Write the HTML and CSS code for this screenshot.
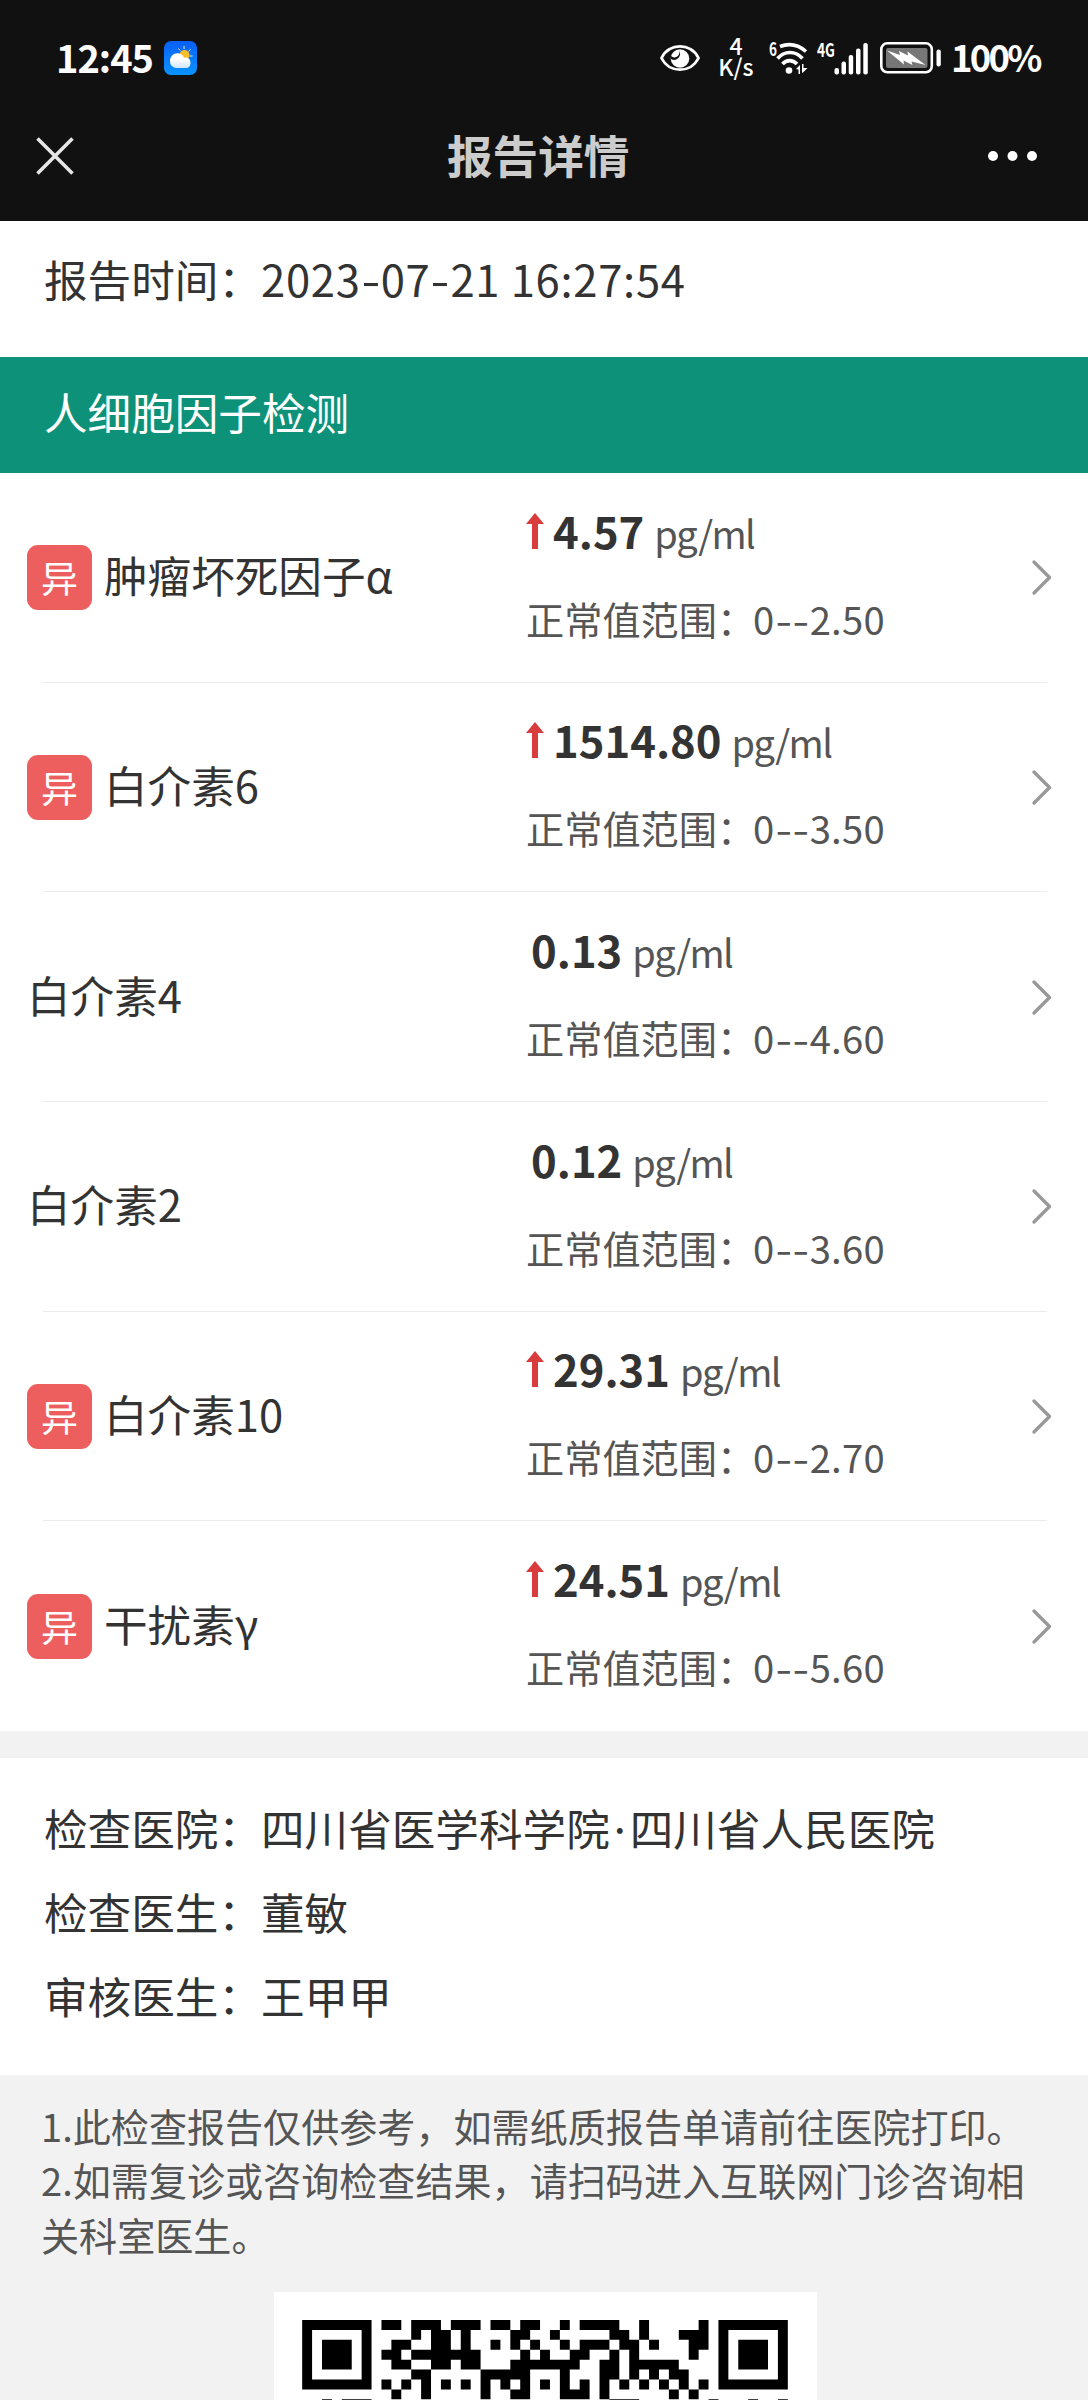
FILE: index.html
```
<!DOCTYPE html>
<html lang="zh-CN">
  <head>
    <meta charset="UTF-8" />
    <meta name="viewport" content="width=device-width, initial-scale=1.0" />
    <title>报告详情</title>
    <link rel="stylesheet" href="styles.css">
  </head>
  <body>
    <header class="top">
      <div class="status-bar">
        <span class="clock">12:45</span>
        <svg class="weather" width="33" height="34" viewBox="0 0 33 34">
          <defs>
            <linearGradient id="sky" x1="0" y1="0" x2="0" y2="1">
              <stop offset="0" stop-color="#0a5ff5" />
              <stop offset="1" stop-color="#0a94ff" />
            </linearGradient>
            <linearGradient id="cloud" x1="0" y1="0" x2="0" y2="1">
              <stop offset="0.4" stop-color="#ffffff" />
              <stop offset="1" stop-color="#cfe6fb" />
            </linearGradient>
          </defs>
          <rect width="33" height="34" rx="7" fill="url(#sky)" />
          <path d="M20 5v3M14.500 7.500l1.600 2M26.500 8.500l-2 1.800M25.500 15h3" stroke="#ffe9a0" stroke-width="1" />
          <circle cx="20.500" cy="14" r="5" fill="#f9bd25" />
          <path d="M12 27a6.500 6.500 0 0 1-6-7c0-5 4.500-9 9.500-7.500 2.500.7 4 2.500 4.500 4.500 4-1.500 6.500 1.500 6.500 5 0 3-2 5-4.500 5z" fill="url(#cloud)" />
        </svg>
        <div class="status-icons">
          <svg class="eye" width="40" height="28" viewBox="0 0 40 28">
            <path d="M1.500 14C9-1.500 31-1.500 38.500 14 31 29.500 9 29.500 1.500 14z" fill="none" stroke="#fff" stroke-width="2.800" />
            <circle cx="20" cy="14.500" r="9.300" fill="#fff" />
            <path d="M11 12a5 5 0 0 0 8-5.500A6 6 0 0 1 11 15z" fill="#111" />
          </svg>
          <div class="speed"><span>4</span><span>K/s</span></div>
          <svg class="wifi" width="40" height="36" viewBox="0 0 40 36">
            <text x="0" y="15.500" font-size="19" font-weight="700" textLength="8" lengthAdjust="spacingAndGlyphs" fill="#fff">6</text>
            <g fill="none" stroke="#fff" stroke-width="3.600">
              <path d="M11 6.500c9-3.500 18-2 26 5" />
              <path d="M8.500 18.500c7-8 18-8 25 0" />
              <path d="M13.500 24c4-4.500 10-4.500 14.500 0" />
            </g>
            <circle cx="20" cy="30.500" r="3.300" fill="#fff" />
            <path d="M27 29l4-4v9h-1.500v-4.500zM33 24v9l1.500-1 4-4h-4v-4z" fill="#fff" />
          </svg>
          <svg class="signal" width="51" height="36" viewBox="0 0 51 36">
            <text x="0" y="16.500" font-size="19" font-weight="700" textLength="18" lengthAdjust="spacingAndGlyphs" fill="#fff">4G</text>
            <g fill="#fff">
              <rect x="17.500" y="28" width="4.500" height="6.500" rx="2" />
              <rect x="24.500" y="21.500" width="4.500" height="13" rx="2" />
              <rect x="31.700" y="15" width="4.500" height="19.500" rx="2" />
              <rect x="39" y="8.500" width="4.500" height="26" rx="2" />
              <rect x="46.300" y="3" width="4.500" height="31.500" rx="2" />
            </g>
          </svg>
          <svg class="battery" width="61" height="32" viewBox="0 0 61 32">
            <rect x="1.300" y="1.300" width="50.500" height="29" rx="6" fill="none" stroke="#fff" stroke-width="2.600" />
            <rect x="6" y="6" width="41.500" height="20" rx="2" fill="#777" />
            <path d="M7 8.500l13 4.500-1-4 9 4.500-.5-4L45.500 23l-14-3.500 1 3.500-9-4.500.5 4z" fill="#fff" />
            <rect x="56.500" y="7.500" width="4.300" height="17" rx="2" fill="#fff" />
          </svg>
          <span class="percent">100%</span>
        </div>
      </div>
      <div class="nav">
        <svg class="close" width="38" height="38" viewBox="0 0 38 38">
          <path d="M1.500 1.500l35 35M36.500 1.500l-35 35" stroke="#e6e6e6" stroke-width="3.600" />
        </svg>
        <h1>报告详情</h1>
        <svg class="more" width="50" height="10" viewBox="0 0 50 10">
          <g fill="#fff">
            <circle cx="5" cy="5" r="5" />
            <circle cx="24.500" cy="5" r="5" />
            <circle cx="44" cy="5" r="5" />
          </g>
        </svg>
      </div>
    </header>

    <div class="report-time"><span class="label">报告时间：</span><span class="time">2023<i class="dash">-</i>07<i class="dash">-</i>21 16:27:54</span></div>
    <h2 class="group-title">人细胞因子检测</h2>

    <div class="results"></div>

    <div class="info">
      <div><span class="label">检查医院：</span><span>四川省医学科学院<i class="dot">·</i>四川省人民医院</span></div>
      <div><span class="label">检查医生：</span><span>董敏</span></div>
      <div><span class="label">审核医生：</span><span>王甲甲</span></div>
    </div>

    <div class="notes">
      <p>1.此检查报告仅供参考，如需纸质报告单请前往医院打印。</p>
      <p>2.如需复诊或咨询检查结果，请扫码进入互联网门诊咨询相<br>关科室医生。</p>
      <div class="qr-box">
        <svg class="qr" viewBox="0 0 49 8.040"><path /></svg>
      </div>
    </div>

    <script>
      const results = [
        { name: "肿瘤坏死因子α", value: "4.57", range: "0--2.50", high: true },
        { name: "白介素6", value: "1514.80", range: "0--3.50", high: true },
        { name: "白介素4", value: "0.13", range: "0--4.60", high: false },
        { name: "白介素2", value: "0.12", range: "0--3.60", high: false },
        { name: "白介素10", value: "29.31", range: "0--2.70", high: true },
        { name: "干扰素γ", value: "24.51", range: "0--5.60", high: true },
      ];

      const arrow = `<svg class="arrow" width="18" height="36" viewBox="0 0 18 36"><path d="M9 0l9 11h-6v25H6V11H0z" fill="#d93c3c" /></svg>`;

      document.querySelector(".results").innerHTML = results
        .map(
          (item) => `
        <div class="row">
          <div class="name">${item.high ? '<span class="badge">异</span>' : ""}<span class="name-text">${item.name}</span></div>
          <div class="detail">
            <div class="value ${item.high ? "high" : ""}">${item.high ? arrow : ""}<b>${item.value}</b><span class="unit">pg/ml</span></div>
            <div class="range"><span class="range-label">正常值范围：</span><span class="limits">${item.range.replace(/-/g, '<i class="dash">-</i>')}</span></div>
          </div>
          <svg class="chevron" width="20" height="35" viewBox="0 0 20 35"><path d="M2 2l15.500 15.500L2 33" fill="none" stroke="#999" stroke-width="3.400" stroke-linecap="round" stroke-linejoin="round" /></svg>
        </div>`
        )
        .join("");

      // dark runs per row: [first column, length]
      const qrRows = [
        [[0, 7], [8, 2], [11, 3], [15, 3], [19, 2], [22, 2], [26, 1], [28, 4], [34, 1], [40, 1], [42, 7]],
        [[0, 1], [6, 1], [11, 1], [13, 2], [16, 1], [21, 2], [25, 1], [31, 2], [34, 1], [38, 3], [42, 1], [48, 1]],
        [[0, 1], [2, 3], [6, 1], [9, 2], [13, 2], [16, 1], [19, 1], [21, 1], [23, 1], [26, 1], [28, 3], [32, 2], [35, 1], [39, 2], [42, 1], [44, 3], [48, 1]],
        [[0, 1], [2, 3], [6, 1], [8, 2], [11, 7], [22, 1], [24, 1], [27, 2], [31, 1], [33, 1], [39, 1], [42, 1], [44, 3], [48, 1]],
        [[0, 1], [2, 3], [6, 1], [9, 2], [13, 2], [16, 2], [21, 7], [30, 2], [33, 5], [42, 1], [44, 3], [48, 1]],
        [[0, 1], [6, 1], [11, 2], [18, 5], [26, 1], [30, 2], [33, 1], [35, 1], [37, 2], [42, 1], [48, 1]],
        [[0, 7], [8, 1], [10, 1], [12, 1], [14, 1], [16, 1], [18, 1], [20, 1], [22, 1], [24, 1], [26, 1], [28, 1], [30, 1], [32, 1], [34, 1], [36, 1], [38, 1], [40, 1], [42, 7]],
        [[9, 1], [12, 1], [18, 1], [21, 2], [26, 3], [30, 1], [37, 1], [39, 1]],
        [[2, 1], [4, 3], [31, 3], [41, 1], [45, 1], [48, 1]],
      ];

      document.querySelector(".qr path").setAttribute(
        "d",
        qrRows
          .map((runs, y) => runs.map(([x, w]) => `M${x} ${y}h${w}v1h-${w}z`).join(""))
          .join("")
      );
    </script>
  </body>
</html>
```
FILE: styles.css
```
* {
  box-sizing: border-box;
}

body {
  margin: 0;
  background-color: #f2f2f2;
  color: #333;
  font-family: "Noto Sans CJK SC", sans-serif;
  font-size: 43.6px;
}

h1,
h2,
p {
  margin: 0;
  font-weight: 400;
}

svg {
  overflow: visible;
}

.top {
  height: 221px;
  background-color: #111;
  color: #fff;
}

.status-bar {
  display: flex;
  align-items: center;
  height: 115px;
  padding: 0 49px 0 56px;
}

.clock {
  width: 108px;
  padding-bottom: 3px;
  font-size: 38px;
  font-weight: 700;
  letter-spacing: -1px;
}

.status-icons {
  display: flex;
  align-items: center;
  margin-left: auto;
}

.speed {
  display: flex;
  flex-direction: column;
  align-items: center;
  width: 36px;
  margin-left: 18px;
  padding-bottom: 3px;
  font-size: 23px;
  font-weight: 500;
  line-height: 21px;
}

.wifi {
  margin-left: 15px;
}

.signal {
  margin-left: 8px;
}

.battery {
  margin-left: 12px;
}

.percent {
  width: 88px;
  margin-left: 10px;
  padding-bottom: 3px;
  font-size: 36.5px;
  font-weight: 700;
  letter-spacing: -2.8px;
}

.nav {
  display: flex;
  align-items: center;
  height: 82px;
  padding-left: 36px;
}

h1 {
  margin-left: 373px;
  padding-bottom: 4px;
  color: #ccc;
  font-size: 45.6px;
  font-weight: 700;
}

.more {
  margin-left: 359px;
}

.report-time {
  display: flex;
  height: 136px;
  padding-left: 44px;
  background-color: #fff;
  line-height: 114px;
}

.label {
  flex: none;
  width: 217px;
  white-space: nowrap;
}

.time {
  letter-spacing: 0.7px;
}

.dash {
  display: inline-block;
  width: 0.46em;
  font-style: normal;
  letter-spacing: 0;
  text-align: center;
  transform: scaleX(1.25);
}

.group-title {
  height: 116px;
  padding-left: 44px;
  background-color: #0d9279;
  color: #fff;
  font-size: 43.6px;
  line-height: 109px;
}

.results {
  display: grid;
  grid-template-rows: repeat(6, 1fr);
  height: 1258px;
  background-color: #fff;
}

.row {
  display: grid;
  grid-template-columns: 499px 1fr 20px;
  align-items: center;
  padding: 0 36px 0 27px;
  background: linear-gradient(#ececec, #ececec) 43px 100% / 1004px 1px no-repeat;
}

.row:last-child {
  background: none;
}

.name {
  display: flex;
  align-items: center;
  gap: 12px;
}

.name-text {
  padding-bottom: 7px;
}

.badge {
  width: 65px;
  height: 65px;
  border-radius: 11px;
  background-color: #ed5e5e;
  color: #fff;
  font-size: 37px;
  line-height: 64px;
  text-align: center;
}

.detail {
  padding-bottom: 8px;
}

.value {
  display: flex;
  align-items: baseline;
  height: 87px;
  padding-left: 5px;
  line-height: 86px;
}

.value.high {
  padding-left: 0;
}

.arrow {
  margin-right: 9px;
}

.unit {
  margin-left: 10px;
  color: #555;
  font-size: 38px;
  letter-spacing: -1.6px;
}

.range {
  display: flex;
  height: 87px;
  color: #555;
  font-size: 38.2px;
  line-height: 89px;
  white-space: nowrap;
}

.range-label {
  flex: none;
  width: 227px;
}

.limits {
  letter-spacing: 0.3px;
}

.info {
  height: 317px;
  margin-top: 27px;
  padding: 27px 44px;
  background-color: #fff;
  line-height: 84px;
}

.info div {
  display: flex;
}

.dot {
  display: inline-block;
  width: 20px;
  font-family: Inter, sans-serif;
  font-style: normal;
  line-height: 1;
  text-align: center;
}

.notes {
  padding: 24px 41px 0;
  color: #555;
  font-size: 38.1px;
  line-height: 54.3px;
  white-space: nowrap;
}

.qr-box {
  width: 543px;
  height: 108px;
  margin: 30px 0 0 233px;
  padding: 28px 28px 0;
  background-color: #fff;
}

.qr {
  display: block;
  width: 486px;
  height: 79.7px;
  overflow: hidden;
}
```
